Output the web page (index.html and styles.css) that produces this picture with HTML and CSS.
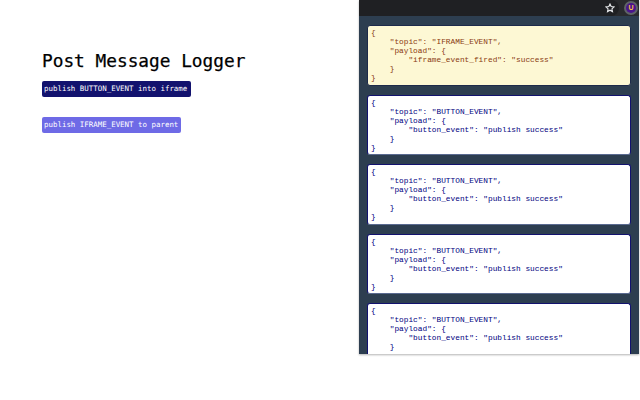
FILE: index.html
```html
<!DOCTYPE html>
<html lang="en">
<head>
<meta charset="utf-8">
<title>Post Message Logger</title>
<link rel="stylesheet" href="styles.css">
</head>
<body>
<main class="page">
  <h1 class="title">Post Message Logger</h1>
  <button class="btn btn-dark">publish BUTTON_EVENT into iframe</button>
  <button class="btn btn-light">publish IFRAME_EVENT to parent</button>
</main>
<aside class="popup">
  <div class="toolbar">
    <div class="omnibox">
      <svg class="star" viewBox="0 0 12 12" width="10" height="10"><path d="M6 1.2l1.4 3.1 3.4.4-2.5 2.3.7 3.3L6 8.6 3 10.3l.7-3.3L1.200 4.700l3.400-.4z" fill="none" stroke="#e8eaed" stroke-width="1.300"/></svg>
    </div>
    <div class="avatar-ring"><span class="avatar">U</span></div>
  </div>
  <div class="list">
<pre class="card card-iframe">{
    "topic": "IFRAME_EVENT",
    "payload": {
        "iframe_event_fired": "success"
    }
}</pre>
<pre class="card">{
    "topic": "BUTTON_EVENT",
    "payload": {
        "button_event": "publish success"
    }
}</pre>
<pre class="card">{
    "topic": "BUTTON_EVENT",
    "payload": {
        "button_event": "publish success"
    }
}</pre>
<pre class="card">{
    "topic": "BUTTON_EVENT",
    "payload": {
        "button_event": "publish success"
    }
}</pre>
<pre class="card">{
    "topic": "BUTTON_EVENT",
    "payload": {
        "button_event": "publish success"
    }</pre>
  </div>
</aside>
</body>
</html>
```
FILE: styles.css
```css
html, body { margin: 0; height: 100%; background: #fff; overflow: hidden; }
body { display: flex; align-items: flex-start; }
.page {
  width: 317px;
  padding: 51px 0 0 42px;
  display: flex;
  flex-direction: column;
  align-items: flex-start;
  flex: none;
}
.title {
  margin: 0 0 10px;
  font: 400 17.8px/20px "DejaVu Sans Mono", monospace;
  color: #000;
  white-space: nowrap;
  -webkit-text-stroke: 0.25px #000;
}
.btn {
  border: 0;
  border-radius: 2px;
  padding: 0 2px;
  height: 16px;
  font: 400 7.45px/16px "DejaVu Sans Mono", monospace;
  color: #fff;
  white-space: nowrap;
  text-align: left;
}
.btn-dark { background: #12126e; margin-bottom: 20px; width: 149px; }
.btn-light { background: #6e6ae6; width: 139px; }
.popup {
  width: 280px;
  height: 354px;
  flex: none;
  background: #2d3e50;
  box-shadow: 0 1px 2px rgba(0,0,0,.3);
  display: flex;
  flex-direction: column;
  overflow: hidden;
}
.toolbar {
  height: 16px;
  flex: none;
  background: #292a2d;
  display: flex;
  align-items: center;
  gap: 5px;
  padding-right: 1px;
}
.omnibox {
  flex: 1;
  height: 16px;
  background: #1f2023;
  border-radius: 0 8px 8px 0;
  display: flex;
  align-items: center;
  justify-content: flex-end;
  padding-right: 4px;
}
.star { display: block; }
.avatar-ring {
  width: 14px; height: 14px;
  border-radius: 50%;
  background: #5f6368;
  display: flex; align-items: center; justify-content: center;
}
.avatar {
  width: 10px; height: 10px; border-radius: 50%;
  background: #4a148c;
  color: #f5c542;
  font: 700 7px/10px "Liberation Sans", sans-serif;
  text-align: center;
}
.list {
  padding: 9px 8px 0;
  display: flex;
  flex-direction: column;
  gap: 9px;
}
.card {
  margin: 0;
  flex: none;
  height: 60.5px;
  box-sizing: border-box;
  padding: 3px 3px 0 3px;
  background: #fff;
  border: 1px solid #12126e;
  border-bottom-color: #5a6a90;
  border-radius: 3px;
  color: #000080;
  font: 400 7.8px/9px "Liberation Mono", monospace;
}
.card-iframe {
  background: #fdf8d4;
  border-color: #1d2a4a;
  color: #8a3b12;
}
```
